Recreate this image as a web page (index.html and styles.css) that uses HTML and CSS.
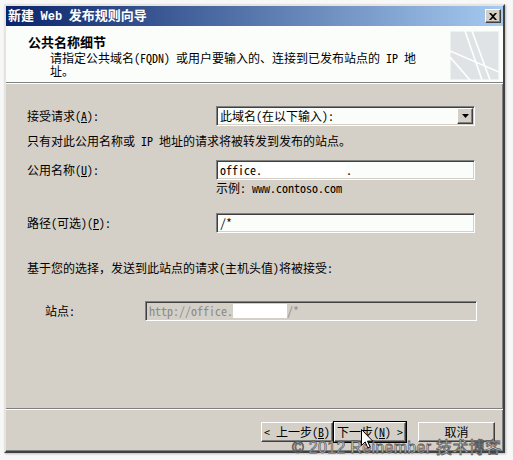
FILE: index.html
```html
<!DOCTYPE html>
<html lang="zh-CN">
<head>
<meta charset="utf-8">
<title>新建 Web 发布规则向导</title>
<link rel="stylesheet" href="styles.css">
</head>
<body>
<div class="window">
  <div class="titlebar">
    <span class="title">新建 <span class="web">Web</span> 发布规则向导</span>
    <span class="close"><svg width="8" height="7" viewBox="0 0 8 7"><path d="M0 0h2l2 2 2-2h2L5 3.5 8 7H6L4 5 2 7H0l3-3.5z" fill="#000"/></svg></span>
  </div>
  <div class="header">
    <div class="htext">
      <div class="htitle">公共名称细节</div>
      <div class="hsub">请指定公共域名(FQDN) 或用户要输入的、连接到已发布站点的 IP 地址。</div>
    </div>
    <svg class="hicon" width="49" height="49" viewBox="0 0 49 49">
      <rect width="49" height="49" fill="#dfe3e5"/>
      <rect x="0.5" y="0.5" width="48" height="48" fill="none" stroke="#eef0f1"/>
      <g stroke="#fff" stroke-width="1.6" fill="none">
        <line x1="15" y1="0" x2="32" y2="49"/>
        <line x1="22" y1="0" x2="40" y2="49"/>
        <line x1="0" y1="20" x2="49" y2="41"/>
        <line x1="0" y1="26" x2="20" y2="49"/>
      </g>
    </svg>
  </div>
  <div class="content">
    <div class="row r1">
      <span class="label">接受请求(<u>A</u>):</span>
      <div class="field select">
        <span class="ftext">此域名(在以下输入):</span>
        <span class="dropbtn"><svg width="7" height="4" viewBox="0 0 7 4"><path d="M0 0h7L3.5 4z" fill="#000"/></svg></span>
      </div>
    </div>
    <div class="note">只有对此公用名称或 IP 地址的请求将被转发到发布的站点。</div>
    <div class="row r3">
      <span class="label">公用名称(<u>U</u>):</span>
      <div class="field"><span class="ftext">office.<span class="mask"></span>.</span></div>
    </div>
    <div class="example">示例: www.contoso.com</div>
    <div class="row r5">
      <span class="label">路径(可选)(<u>P</u>):</span>
      <div class="field"><span class="ftext">/*</span></div>
    </div>
    <div class="para">基于您的选择，发送到此站点的请求(主机头值)将被接受:</div>
    <div class="row r7">
      <span class="label site-label">站点:</span>
      <div class="field disabled"><span class="ftext">http://office.<span class="mask2"></span>/*</span></div>
    </div>
  </div>
  <div class="footer">
    <div class="btn">&lt; 上一步(<u>B</u>)</div>
    <div class="btn default">下一步(<u>N</u>) &gt;</div>
    <div class="btn cancel">取消</div>
  </div>
</div>
<div class="watermark">© 2012 Reinember 技术博客</div>
<svg class="cursor" width="13" height="20" viewBox="0 0 13 20"><path d="M0.5 0.5V16.5l3.7-3.6 2.6 6 2.3-1-2.6-5.8h5.2z" fill="#fff" stroke="#000" stroke-width="1"/></svg>
</body>
</html>
```

FILE: styles.css
```css
html, body {
  margin: 0;
  padding: 0;
}
body {
  width: 513px;
  height: 460px;
  background: #f7f7f7;
  position: relative;
  overflow: hidden;
  font-family: "Noto Sans Mono CJK SC", "Noto Sans CJK SC", monospace;
  font-size: 12px;
  color: #000;
}
u { text-decoration: underline; text-underline-offset: 1px; }

.window {
  position: absolute;
  left: 4px;
  top: 4px;
  width: 497px;
  height: 445px;
  border: 2px solid;
  border-color: #e6e4df #404040 #404040 #e6e4df;
  box-shadow: inset -1px -1px 0 #808080, 1px 1px 2px rgba(0,0,0,0.25);
  background: #d4d0c8;
  display: flex;
  flex-direction: column;
}

.titlebar {
  height: 20px;
  flex: none;
  background: linear-gradient(to right, #0a246a, #a6caf0);
  display: flex;
  align-items: center;
  justify-content: space-between;
  padding-left: 2px;
  padding-right: 2px;
}
.title {
  color: #fff;
  font-weight: bold;
  font-size: 13px;
  line-height: 16px;
  white-space: nowrap;
}
.web { font-family: "Liberation Mono", monospace; font-size: 12px; }
.close {
  width: 14px;
  height: 12px;
  background: #d4d0c8;
  border: 1px solid;
  border-color: #fff #404040 #404040 #fff;
  box-shadow: inset -1px -1px 0 #808080;
  display: flex;
  align-items: center;
  justify-content: center;
}

.header {
  height: 56px;
  flex: none;
  background: #fbfdfb;
  border-bottom: 1px solid #808080;
  display: flex;
  justify-content: space-between;
  align-items: flex-start;
}
.htext { padding-left: 22px; padding-top: 8px; }
.htitle { font-weight: bold; font-size: 13px; line-height: 16px; }
.hsub { margin-left: 22px; margin-top: 1px; width: 372px; line-height: 13px; }
.hicon { margin-top: 5px; margin-right: 4px; flex: none; }

.content {
  flex: 1;
  border-top: 1px solid #fff;
  padding-left: 21px;
  display: flex;
  flex-direction: column;
  align-items: flex-start;
}
.row { display: flex; align-items: center; }
.label { width: 189px; line-height: 14px; white-space: nowrap; }
.field {
  width: 255px;
  height: 16px;
  border: 1px solid;
  border-color: #808080 #fff #fff #808080;
  box-shadow: inset 1px 1px 0 #404040, inset -1px -1px 0 #d4d0c8;
  background: #fbfdfb;
  display: flex;
  align-items: center;
  justify-content: space-between;
  padding: 1px;
}
.ftext { padding-left: 2px; line-height: 14px; white-space: nowrap; display: flex; align-items: center; }
.mask { display: inline-block; width: 84px; height: 14px; background: #fff; }
.mask2 { display: inline-block; width: 54px; height: 14px; background: #fff; }
.select .dropbtn {
  width: 14px;
  height: 14px;
  background: #d4d0c8;
  border: 1px solid;
  border-color: #fff #404040 #404040 #fff;
  box-shadow: inset -1px -1px 0 #808080;
  display: flex;
  align-items: center;
  justify-content: center;
}
.r1 { margin-top: 22px; }
.note { margin-top: 8px; line-height: 14px; }
.r3 { margin-top: 12px; }
.example { margin-left: 189px; margin-top: 1px; line-height: 14px; }
.r5 { margin-top: 18px; }
.para { margin-top: 28px; line-height: 14px; }
.r7 { margin-top: 26px; }
.site-label { width: 100px; padding-left: 18px; }
.field.disabled { width: 328px; background: #d4d0c8; color: #8a8a8a; }

.footer {
  flex: none;
  border-top: 1px solid #808080;
  box-shadow: inset 0 1px 0 #fff;
  display: flex;
  justify-content: flex-end;
  align-items: flex-start;
  padding-top: 13px;
  padding-right: 8px;
  box-sizing: border-box;
  height: 43px;
}
.btn {
  width: 70px;
  height: 18px;
  border: 1px solid;
  border-color: #fff #404040 #404040 #fff;
  box-shadow: inset -1px -1px 0 #808080;
  background: #d4d0c8;
  display: flex;
  align-items: center;
  justify-content: center;
  line-height: 12px;
  white-space: nowrap;
}
.btn.default {
  outline: 1px solid #000;
  margin-left: 1px;
}
.btn.cancel { margin-left: 12px; width: 75px; }

.watermark {
  position: absolute;
  left: 292px;
  top: 441px;
  font-family: "Liberation Sans", "Noto Sans CJK SC", sans-serif;
  font-size: 16px;
  line-height: 13px;
  letter-spacing: 0.3px;
  color: #fff;
  -webkit-text-stroke: 0.8px rgba(70,70,70,0.9);
  white-space: nowrap;
}
.cursor {
  position: absolute;
  left: 361px;
  top: 429px;
}
```
